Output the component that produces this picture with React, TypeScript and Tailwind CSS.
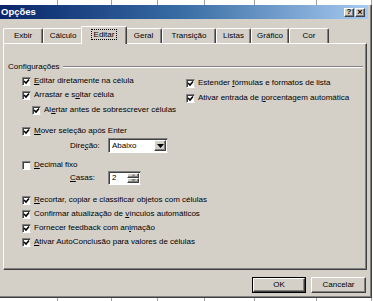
import type { ReactNode } from "react";

function Check({ checked = true }: { checked?: boolean }) {
  return (
    <span className="w-[9px] h-[9px] shrink-0 bg-white border border-t-[#808080] border-l-[#808080] border-b-white border-r-[#d4d0c8] shadow-[inset_1px_1px_0_#404040] flex items-center justify-center">
      {checked && (
        <svg width="7" height="7" viewBox="0 0 7 7">
          <path d="M1 3 L3 5 L6 1.5" stroke="#000" strokeWidth="1.6" fill="none" />
        </svg>
      )}
    </span>
  );
}

function Row({ checked = true, children, className = "" }: { checked?: boolean; children: ReactNode; className?: string }) {
  return (
    <div className={`h-[12px] flex items-center gap-[3px] ${className}`}>
      <Check checked={checked} />
      <span className="leading-[10px] whitespace-nowrap">{children}</span>
    </div>
  );
}

function Tab({ label, w, selected = false }: { label: string; w: string; selected?: boolean }) {
  if (selected) {
    return (
      <div className={`${w} h-[18px] -mx-[2px] -mb-[1px] relative z-10 bg-[#d4d0c8] border-l border-t border-white border-r border-r-[#404040] shadow-[inset_-1px_0_0_#808080] rounded-t-[2px] flex items-center justify-center pb-[2px]`}>
        <span className="border border-dotted border-black px-[2px] leading-[9px]">{label}</span>
      </div>
    );
  }
  return (
    <div className={`${w} h-[15px] border-l border-t border-white border-r border-r-[#404040] shadow-[inset_-1px_0_0_#808080] rounded-t-[2px] flex items-center justify-center`}>
      <span className="leading-[10px]">{label}</span>
    </div>
  );
}

function Raised({ children, className = "" }: { children: ReactNode; className?: string }) {
  return (
    <div className={`bg-[#d4d0c8] border border-t-white border-l-white border-b-[#404040] border-r-[#404040] shadow-[inset_-1px_-1px_0_#808080] flex items-center justify-center ${className}`}>
      {children}
    </div>
  );
}

export default function App() {
  const gridLines = [58, 54, 46, 47, 50, 62, 55];

  return (
    <div className="w-[373px] h-[301px] overflow-hidden bg-white flex flex-col font-['Liberation_Sans',Arial,sans-serif] text-[8px] text-black">
      {/* sheet behind the dialog */}
      <div className="h-[5px] flex shrink-0">
        {gridLines.map((w, i) => (
          <div key={i} style={{ width: w }} className="border-r border-[#a0a0a0]" />
        ))}
      </div>

      {/* dialog */}
      <div className="w-[372px] h-[293px] shrink-0 bg-[#d4d0c8] border-r border-b border-[#404040] shadow-[inset_-1px_-1px_0_#808080] flex flex-col">
        <div className="h-[14px] mr-[3px] bg-gradient-to-r from-[#0a246a] via-[#3a6ea5] to-[#a6caf0] flex items-center pl-[1px] pr-[3px]">
          <span className="text-white font-bold text-[9.5px] leading-none flex-1">Opções</span>
          <Raised className="w-[10px] h-[9px] text-[8px] font-bold leading-none">?</Raised>
          <Raised className="w-[10px] h-[9px] ml-[1px] text-[9px] font-bold leading-none">×</Raised>
        </div>

        {/* tabs */}
        <div className="mt-[6px] h-[18px] pl-[3px] flex items-end">
          <Tab label="Exbir" w="w-[40px]" />
          <Tab label="Cálculo" w="w-[40px]" />
          <Tab label="Editar" w="w-[46px]" selected />
          <Tab label="Geral" w="w-[37px]" />
          <Tab label="Transição" w="w-[54px]" />
          <Tab label="Listas" w="w-[35px]" />
          <Tab label="Gráfico" w="w-[38px]" />
          <Tab label="Cor" w="w-[40px]" />
        </div>

        {/* panel */}
        <div className="ml-[3px] w-[364px] h-[227px] border border-t-white border-l-white border-b-[#404040] border-r-[#404040] shadow-[inset_-1px_-1px_0_#808080] pl-[4px] pr-[3px] pt-[18px] flex flex-col">
          <div className="h-[10px] flex items-center gap-[3px]">
            <span className="leading-[10px]">Configurações</span>
            <div className="flex-1 h-[2px] border-t border-[#808080] border-b border-b-white" />
          </div>

          <div className="flex mt-[3px]">
            <div className="w-[160px] ml-[14px] flex flex-col">
              <Row>
                <u>E</u>ditar diretamente na célula
              </Row>
              <Row className="mt-[2px]">
                Arrastar e s<u>o</u>ltar célula
              </Row>
              <Row className="mt-[3px] ml-[10px]">
                Al<u>e</u>rtar antes de sobrescrever células
              </Row>
              <Row className="mt-[9px]">
                <u>M</u>over seleção após Enter
              </Row>
              <div className="mt-[1px] h-[15px] flex items-center">
                <span className="w-[38px] ml-[48px] leading-[10px]">
                  Dire<u>ç</u>ão:
                </span>
                <div className="w-[60px] h-[15px] bg-white border border-t-[#808080] border-l-[#808080] border-b-white border-r-[#d4d0c8] shadow-[inset_1px_1px_0_#404040] flex items-center pl-[3px] pr-[1px]">
                  <span className="flex-1 leading-[10px]">Abaixo</span>
                  <Raised className="w-[12px] h-[11px]">
                    <svg width="7" height="4" viewBox="0 0 7 4">
                      <path d="M0 0 H7 L3.5 4 Z" fill="#000" />
                    </svg>
                  </Raised>
                </div>
              </div>
            </div>

            <div className="ml-[4px] pt-[2px] flex flex-col">
              <Row>
                Estender <u>f</u>órmulas e formatos de lista
              </Row>
              <Row className="mt-[3px]">
                Ativar entrada de <u>p</u>orcentagem automática
              </Row>
            </div>
          </div>

          <div className="ml-[14px] flex flex-col">
            <Row checked={false} className="mt-[6px]">
              <u>D</u>ecimal fixo
            </Row>
            <div className="h-[14px] flex items-center">
              <span className="w-[38px] ml-[48px] leading-[10px]">
                <u>C</u>asas:
              </span>
              <div className="w-[33px] h-[14px] bg-white border border-t-[#808080] border-l-[#808080] border-b-white border-r-[#d4d0c8] shadow-[inset_1px_1px_0_#404040] flex items-center pl-[3px] pr-[1px]">
                <span className="flex-1 leading-[10px]">2</span>
                <div className="w-[12px] h-[10px] flex flex-col">
                  <Raised className="h-[5px]">
                    <svg width="5" height="3" viewBox="0 0 5 3">
                      <path d="M0 3 H5 L2.5 0 Z" fill="#808080" />
                    </svg>
                  </Raised>
                  <Raised className="h-[5px]">
                    <svg width="5" height="3" viewBox="0 0 5 3">
                      <path d="M0 0 H5 L2.5 3 Z" fill="#808080" />
                    </svg>
                  </Raised>
                </div>
              </div>
            </div>
            <Row className="mt-[9px]">
              <u>R</u>ecortar, copiar e classificar objetos com células
            </Row>
            <Row className="mt-[2px]">
              Confirmar atualização de <u>v</u>ínculos automáticos
            </Row>
            <Row className="mt-[2px]">
              Fornecer feedback com an<u>i</u>mação
            </Row>
            <Row className="mt-[2px]">
              <u>A</u>tivar AutoConclusão para valores de células
            </Row>
          </div>
        </div>

        {/* buttons */}
        <div className="mt-[7px] ml-[252px] flex gap-[5px]">
          <div className="border border-black">
            <Raised className="w-[52px] h-[14px]">
              <span className="leading-[10px]">OK</span>
            </Raised>
          </div>
          <Raised className="w-[55px] h-[16px]">
            <span className="leading-[10px]">Cancelar</span>
          </Raised>
        </div>
      </div>

      <div className="h-[3px] flex">
        {gridLines.map((w, i) => (
          <div key={i} style={{ width: w }} className="border-r border-[#a0a0a0]" />
        ))}
      </div>
    </div>
  );
}
